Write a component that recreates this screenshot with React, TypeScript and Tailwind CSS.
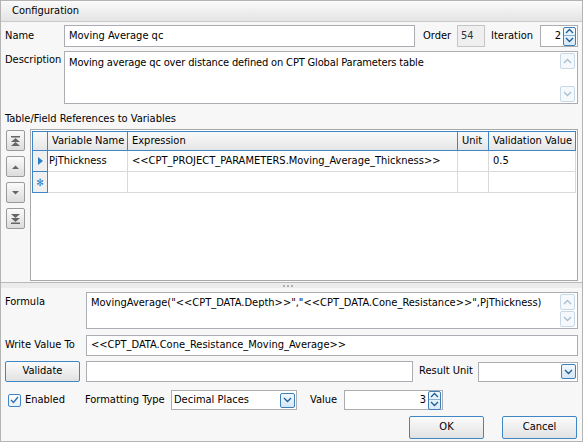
import React from "react";

const font = { fontFamily: '"DejaVu Sans Condensed", Tahoma, "DejaVu Sans", sans-serif' };

function Chevron({ dir, className = "" }: { dir: "up" | "down"; className?: string }) {
  return (
    <svg width="9" height="6" viewBox="0 0 9 6" className={className}>
      <path
        d={dir === "up" ? "M1 5 L4.5 1.5 L8 5" : "M1 1 L4.5 4.5 L8 1"}
        fill="none"
        stroke="currentColor"
        strokeWidth="1.3"
      />
    </svg>
  );
}

function Spin() {
  return (
    <div className="flex h-[19px] w-[13px] flex-col overflow-hidden rounded-[2px] border border-[#3f7fb8] bg-gradient-to-b from-[#f2f8fd] to-[#d9eaf8] text-[#1e5d94]">
      <div className="flex h-1/2 items-center justify-center border-b border-[#8db2d6]">
        <Chevron dir="up" />
      </div>
      <div className="flex h-1/2 items-center justify-center">
        <Chevron dir="down" />
      </div>
    </div>
  );
}

function ComboBtn() {
  return (
    <div className="flex h-[15px] w-[15px] items-center justify-center rounded-[2px] border border-[#3f7fb8] bg-gradient-to-b from-[#f2f8fd] to-[#d4e6f6] text-[#1e5d94]">
      <Chevron dir="down" />
    </div>
  );
}

function ScrollBar() {
  return (
    <div className="flex w-[17px] flex-col justify-between py-[1px] pr-[2px]">
      <div className="flex h-[16px] w-[15px] items-center justify-center rounded-[2px] border border-[#c9d8e6] bg-[#f6f9fc] text-[#a7bccf]">
        <Chevron dir="up" />
      </div>
      <div className="flex h-[16px] w-[15px] items-center justify-center rounded-[2px] border border-[#c9d8e6] bg-[#f6f9fc] text-[#a7bccf]">
        <Chevron dir="down" />
      </div>
    </div>
  );
}

function NavBtn({ kind }: { kind: "first" | "prev" | "next" | "last" }) {
  const paths: Record<string, React.ReactNode> = {
    first: (
      <>
        <rect x="1" y="1" width="9" height="1.5" fill="#666" />
        <path d="M1 7 L5.5 3 L10 7 Z" fill="#666" />
        <path d="M1 11 L5.5 7 L10 11 Z" fill="#666" />
      </>
    ),
    prev: <path d="M2 8 L5.5 4.5 L9 8 Z" fill="#666" />,
    next: <path d="M2 4 L5.5 7.5 L9 4 Z" fill="#666" />,
    last: (
      <>
        <path d="M1 1 L5.5 5 L10 1 Z" fill="#666" />
        <path d="M1 5 L5.5 9 L10 5 Z" fill="#666" />
        <rect x="1" y="9.5" width="9" height="1.5" fill="#666" />
      </>
    ),
  };
  return (
    <div className="flex h-[21px] w-[19px] items-center justify-center rounded-[2px] border border-[#9a9a9a] bg-gradient-to-b from-[#fbfbfb] to-[#dcdcdc]">
      <svg width="11" height="12" viewBox="0 0 11 12">
        {paths[kind]}
      </svg>
    </div>
  );
}

const input = "h-[21px] border border-[#abadb3] bg-white px-[4px] flex items-center";
const head = "flex h-[20px] items-center border-y border-r border-[#3f86c4] bg-gradient-to-b from-[#fafafa] to-[#e6e6e6] pl-[4px]";
const cell = "flex h-[21px] items-center border-b border-r border-[#d9d9d9]";

export default function App() {
  return (
    <div
      style={font}
      className="flex h-[442px] w-[583px] flex-col border border-[#b4b4b4] bg-[#f7f7f7] text-[11px] text-black"
    >
      <div className="flex h-[21px] shrink-0 items-center border-b border-[#c8c8c8] bg-gradient-to-b from-[#fafafa] to-[#e4e4e4] pl-[11px] text-[11px]">
        Configuration
      </div>

      <div className="flex flex-1 flex-col px-[4px]">
        {/* name row */}
        <div className="mt-[3px] flex h-[22px] items-center">
          <span className="w-[59px]">Name</span>
          <div className={`${input} h-[22px] flex-1`}>Moving Average qc</div>
          <span className="ml-[8px] w-[34px]">Order</span>
          <div className="flex h-[22px] w-[28px] items-center border border-[#c5c5c5] bg-[#efefef] px-[3px] text-[#333]">54</div>
          <span className="ml-[6px] w-[49px]">Iteration</span>
          <div className="flex h-[22px] w-[38px] items-center justify-end gap-[2px] border border-[#abadb3] bg-white pr-[1px]">
            <span>2</span>
            <Spin />
          </div>
        </div>

        {/* description */}
        <div className="mt-[4px] flex h-[53px]">
          <span className="w-[59px] pt-[1px]">Description</span>
          <div className="flex flex-1 border border-[#abadb3] bg-white">
            <div className="flex-1 px-[4px] pt-[3px] tracking-[-0.15px]">
              Moving average qc over distance defined on CPT Global Parameters table
            </div>
            <ScrollBar />
          </div>
        </div>

        <div className="mt-[7px] h-[16px]">Table/Field References to Variables</div>

        {/* grid */}
        <div className="mt-[2px] flex h-[152px]">
          <div className="flex w-[26px] flex-col gap-[5px] pl-[1px] pt-[1px]">
            <NavBtn kind="first" />
            <NavBtn kind="prev" />
            <NavBtn kind="next" />
            <NavBtn kind="last" />
          </div>
          <div className="flex-1 border border-[#a8a8a8] bg-white p-[1px]">
            <div className="grid grid-cols-[16px_80px_330px_31px_87px]">
              <div className="h-[20px] border border-[#3f86c4] bg-gradient-to-b from-[#fafafa] to-[#e6e6e6]" />
              <div className={head}>Variable Name</div>
              <div className={head}>Expression</div>
              <div className={head}>Unit</div>
              <div className={head}>Validation Value</div>

              <div className="flex h-[21px] items-center justify-center border-x border-b border-[#3f86c4] bg-[#f0f0f0]">
                <svg width="5" height="8" viewBox="0 0 5 8"><path d="M0 0 L5 4 L0 8 Z" fill="#2f7fc7" /></svg>
              </div>
              <div className={`${cell} pl-[1px]`}>PjThickness</div>
              <div className={`${cell} pl-[4px]`}>&lt;&lt;CPT_PROJECT_PARAMETERS.Moving_Average_Thickness&gt;&gt;</div>
              <div className={cell} />
              <div className={`${cell} pl-[4px]`}>0.5</div>

              <div className="flex h-[21px] items-center justify-center border-x border-b border-[#3f86c4] bg-[#f0f0f0] text-[10px] text-[#2f7fc7]">
                ✻
              </div>
              <div className={cell} />
              <div className={cell} />
              <div className={cell} />
              <div className={cell} />
            </div>
          </div>
        </div>
      </div>

      {/* splitter */}
      <div className="mt-[1px] flex h-[6px] shrink-0 items-center justify-center gap-[2px] border-t border-[#b9b9b9] bg-[#ececec] pr-[8px]">
        <div className="h-[2px] w-[2px] bg-[#b0b0b0]" />
        <div className="h-[2px] w-[2px] bg-[#b0b0b0]" />
        <div className="h-[2px] w-[2px] bg-[#b0b0b0]" />
      </div>

      <div className="flex flex-col px-[4px] pb-[5px]">
        <div className="mt-[4px] flex h-[37px]">
          <span className="w-[81px] pt-[2px]">Formula</span>
          <div className="flex flex-1 border border-[#abadb3] bg-white">
            <div className="flex-1 px-[4px] pt-[2px]">
              MovingAverage("&lt;&lt;CPT_DATA.Depth&gt;&gt;","&lt;&lt;CPT_DATA.Cone_Resistance&gt;&gt;",PjThickness)
            </div>
            <ScrollBar />
          </div>
        </div>

        <div className="mt-[6px] flex h-[20px] items-center">
          <span className="w-[81px]">Write Value To</span>
          <div className={`${input} h-[20px] flex-1`}>&lt;&lt;CPT_DATA.Cone_Resistance_Moving_Average&gt;&gt;</div>
        </div>

        <div className="mt-[6px] flex h-[21px] items-center">
          <div className="flex h-[21px] w-[75px] items-center justify-center rounded-[2px] border border-[#3f86c4] bg-gradient-to-b from-[#fbfbfb] to-[#e2e2e2]">
            Validate
          </div>
          <div className={`${input} ml-[6px] h-[20px] w-[327px]`} />
          <span className="ml-[6px] w-[59px]">Result Unit</span>
          <div className="flex h-[20px] flex-1 items-center justify-end border border-[#abadb3] bg-white pr-[1px]">
            <ComboBtn />
          </div>
        </div>

        <div className="mt-[8px] flex h-[20px] items-center">
          <div className="ml-[3px] flex h-[13px] w-[13px] items-center justify-center rounded-[2px] border border-[#3f86c4] bg-gradient-to-b from-white to-[#e8f1fa]">
            <svg width="9" height="8" viewBox="0 0 9 8"><path d="M1 4 L3.5 6.5 L8 1" fill="none" stroke="#2f6fb0" strokeWidth="1.4" /></svg>
          </div>
          <span className="ml-[4px] w-[60px]">Enabled</span>
          <span className="w-[86px]">Formatting Type</span>
          <div className="flex h-[20px] w-[126px] items-center justify-between border border-[#abadb3] bg-white pl-[2px] pr-[1px]">
            <span>Decimal Places</span>
            <ComboBtn />
          </div>
          <span className="ml-[13px] w-[34px]">Value</span>
          <div className="flex h-[20px] w-[99px] items-center justify-end gap-[2px] border border-[#abadb3] bg-white pr-[1px]">
            <span>3</span>
            <Spin />
          </div>
        </div>

        <div className="mt-[6px] flex justify-end gap-[18px] pr-[1px]">
          <div className="flex h-[23px] w-[75px] items-center justify-center rounded-[2px] border border-[#3f86c4] bg-gradient-to-b from-[#fbfbfb] to-[#e2e2e2]">
            OK
          </div>
          <div className="flex h-[23px] w-[75px] items-center justify-center rounded-[2px] border border-[#3f86c4] bg-gradient-to-b from-[#fbfbfb] to-[#e2e2e2]">
            Cancel
          </div>
        </div>
      </div>
    </div>
  );
}
